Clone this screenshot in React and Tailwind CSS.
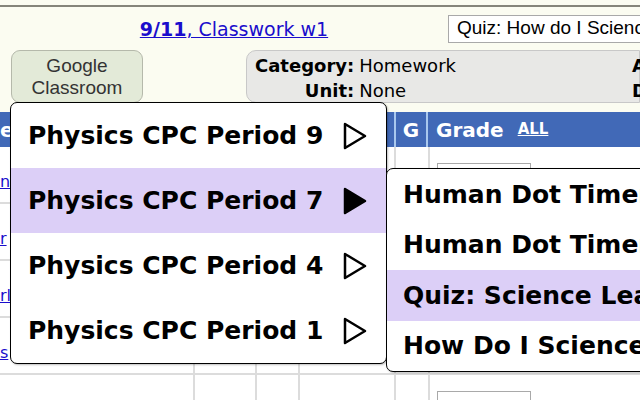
const periods = [
  { name: 'Physics CPC Period 9', active: false },
  { name: 'Physics CPC Period 7', active: true },
  { name: 'Physics CPC Period 4', active: false },
  { name: 'Physics CPC Period 1', active: false },
];

const assignments = [
  { name: 'Human Dot Timer Lab', active: false },
  { name: 'Human Dot Timer Graphs', active: false },
  { name: 'Quiz: Science Learning', active: true },
  { name: 'How Do I Science?', active: false },
];

const rowLinks = ['ne', 'r', 'rl', 's'];

const Arrow = ({ filled }) => (
  <svg width="26" height="30" viewBox="0 0 26 30" className="shrink-0">
    <path
      d="M3 3 L23 15 L3 27 Z"
      fill={filled ? '#000' : 'none'}
      stroke="#000"
      strokeWidth="2.5"
      strokeLinejoin="round"
    />
  </svg>
);

const App = () => {
  return (
    <div className="relative h-[400px] w-[640px] overflow-hidden bg-[#fbfcf1] font-['DejaVu_Sans',sans-serif]">
      <div className="mt-[5px] h-[2px] bg-[#85857a]" />

      {/* title row */}
      <div className="flex h-[40px] items-center pt-[3px]">
        <div className="w-[448px] shrink-0 pl-[20px] pt-[2px] text-center text-[19px] text-[#1a0dcc]">
          <span className="underline">
            <b>9/11</b>, Classwork w1
          </span>
        </div>
        <div className="flex h-[28px] min-w-0 flex-1 items-center overflow-hidden whitespace-nowrap border border-r-0 border-[#a9a9a9] bg-white pl-[8px] font-['Liberation_Sans',sans-serif] text-[19px] text-black">
          Quiz: How do I Science?
        </div>
      </div>

      {/* info row */}
      <div className="mt-[3px] flex h-[56px] items-start">
        <div className="ml-[11px] flex h-[53px] w-[132px] flex-col items-center justify-center rounded-[9px] border border-[#b5b9ab] bg-[#e3ead8] font-['Liberation_Sans',sans-serif] text-[19px] leading-[22px] text-[#333]">
          <span>Google</span>
          <span>Classroom</span>
        </div>
        <div className="ml-[103px] flex h-[53px] flex-1 items-center rounded-l-[10px] border border-[#c8c8c8] bg-[#e8e8e6] pl-[8px] pt-[2px] text-[18px] leading-[25px] text-black">
          <div className="grid grid-cols-[auto_1fr] gap-x-[5px]">
            <span className="text-right font-bold">Category:</span>
            <span>Homework</span>
            <span className="text-right font-bold">Unit:</span>
            <span>None</span>
          </div>
          <div className="ml-auto flex flex-col text-[18px] font-bold leading-[25px]">
            <span className="-mr-[8px]">A</span>
            <span className="-mr-[8px]">D</span>
          </div>
        </div>
      </div>

      {/* table */}
      <div className="mt-[6px]">
        <div className="flex h-[35px] items-center bg-[#4169b7] text-white">
          <div className="w-[394px] text-[20px] font-bold">e</div>
          <div className="flex h-full w-[34px] items-center justify-center border-x-2 border-[#a9c8ee] text-[20px] font-bold">
            G
          </div>
          <div className="flex items-center pl-[8px]">
            <span className="text-[20px] font-bold">Grade</span>
            <span className="ml-[14px] text-[15px] font-bold underline">ALL</span>
          </div>
        </div>
        {rowLinks.map((l, i) => (
          <div key={i} className="flex h-[57px] border-b-[2px] border-[#dcdcdc] bg-white">
            <div className="flex w-[193px] items-center pt-[14px] text-[16px] text-[#1a0dcc] underline">{l}</div>
            <div className="w-[62px] border-l-2 border-[#dcdcdc]" />
            <div className="w-[43px] border-l-2 border-[#dcdcdc]" />
            <div className="w-[96px] border-l-2 border-[#dcdcdc]" />
            <div className="w-[34px] border-l-2 border-[#dcdcdc]" />
            <div className="flex-1 border-l-2 border-[#dcdcdc] pl-[7px] pt-[16px]">
              <div className="h-[26px] w-[94px] border border-[#a9a9a9] bg-white" />
            </div>
          </div>
        ))}
        <div className="flex h-[40px] bg-white">
          <div className="w-[193px]" />
          <div className="w-[62px] border-l-2 border-[#dcdcdc]" />
          <div className="w-[43px] border-l-2 border-[#dcdcdc]" />
          <div className="w-[96px] border-l-2 border-[#dcdcdc]" />
          <div className="w-[34px] border-l-2 border-[#dcdcdc]" />
          <div className="flex-1 border-l-2 border-[#dcdcdc] pl-[7px] pt-[16px]">
            <div className="h-[26px] w-[94px] border border-[#a9a9a9] bg-white" />
          </div>
        </div>
      </div>

      {/* period menu */}
      <div className="absolute left-[10px] top-[102px] w-[377px] overflow-hidden rounded-[7px] border border-black bg-white shadow-[1px_1px_2px_rgba(0,0,0,0.25)]">
        {periods.map((p) => (
          <div
            key={p.name}
            className={`flex h-[65px] items-center justify-between pl-[17px] pr-[18px] ${p.active ? 'bg-[#dccff7]' : ''}`}
          >
            <span className="text-[25px] font-bold text-black">{p.name}</span>
            <Arrow filled={p.active} />
          </div>
        ))}
      </div>

      {/* assignment submenu */}
      <div className="absolute left-[386px] top-[168px] w-[300px] overflow-hidden rounded-[7px] border border-black bg-white shadow-[1px_1px_2px_rgba(0,0,0,0.25)]">
        {assignments.map((a) => (
          <div
            key={a.name}
            className={`flex h-[50.5px] items-center whitespace-nowrap pl-[16px] ${a.active ? 'bg-[#dccff7]' : ''}`}
          >
            <span className="text-[25px] font-bold text-black">{a.name}</span>
          </div>
        ))}
      </div>
    </div>
  );
};

export default App;
